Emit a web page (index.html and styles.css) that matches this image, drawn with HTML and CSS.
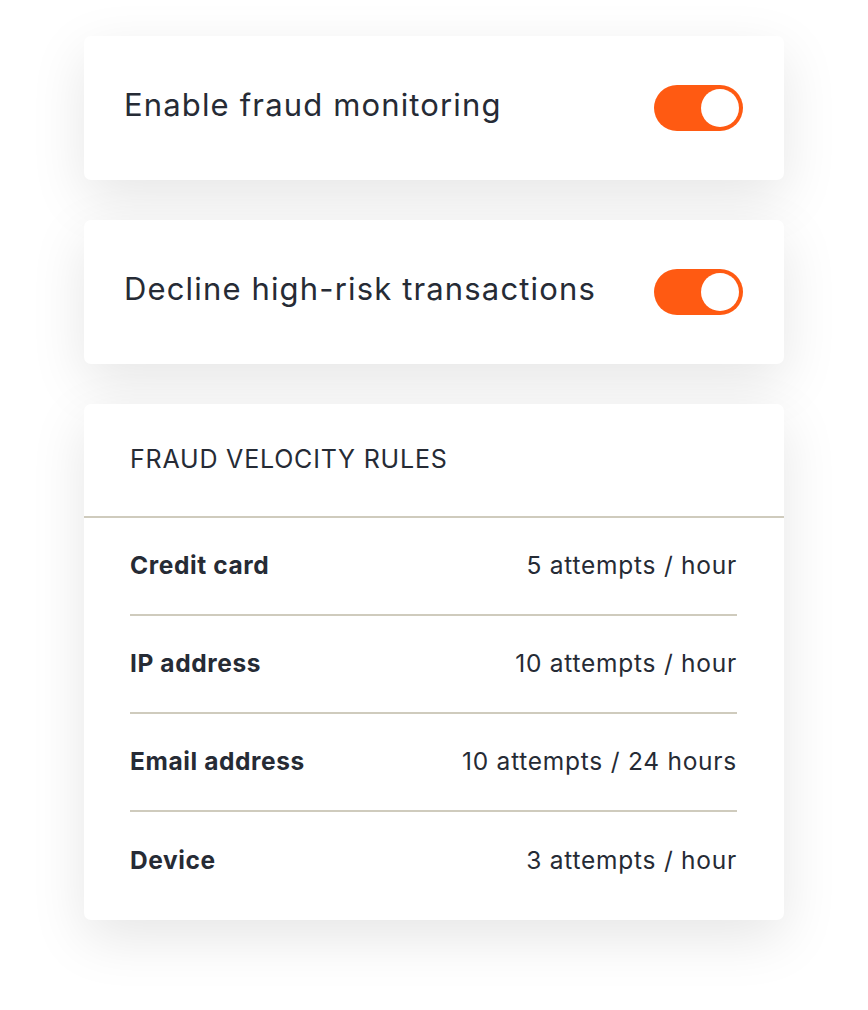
FILE: index.html
```html
<!DOCTYPE html>
<html>
<head>
<meta charset="utf-8">
<link rel="stylesheet" href="styles.css">
</head>
<body>
<main class="stack">
  <section class="card toggle-card">
    <span class="toggle-label">Enable fraud monitoring</span>
    <span class="switch"><span class="knob"></span></span>
  </section>
  <section class="card toggle-card">
    <span class="toggle-label">Decline high-risk transactions</span>
    <span class="switch"><span class="knob"></span></span>
  </section>
  <section class="card rules">
    <h2 class="rules-title">FRAUD VELOCITY RULES</h2>
    <ul class="rule-list">
      <li class="rule"><span class="rule-name">Credit card</span><span class="rule-value">5 attempts / hour</span></li>
      <li class="rule"><span class="rule-name">IP address</span><span class="rule-value">10 attempts / hour</span></li>
      <li class="rule"><span class="rule-name">Email address</span><span class="rule-value">10 attempts / 24 hours</span></li>
      <li class="rule"><span class="rule-name">Device</span><span class="rule-value">3 attempts / hour</span></li>
    </ul>
  </section>
</main>
</body>
</html>
```

FILE: styles.css
```css
* { box-sizing: border-box; }
html, body { margin: 0; padding: 0; background: #ffffff; }
body {
  font-family: "Inter", "Liberation Sans", sans-serif;
  color: #262b35;
  min-height: 1010px;
}
.stack {
  width: 700px;
  margin: 36px 0 0 84px;
  display: flex;
  flex-direction: column;
  gap: 40px;
}
.card {
  background: #ffffff;
  border-radius: 7px;
  box-shadow: 0 18px 56px rgba(0, 0, 0, 0.1);
}
.toggle-card {
  height: 144px;
  display: flex;
  align-items: center;
  justify-content: space-between;
  padding: 0 41px 0 40px;
}
.toggle-label {
  font-size: 31px;
  letter-spacing: 1.15px;
  line-height: 1;
  margin-top: -8px;
}
.switch {
  width: 89px;
  height: 46px;
  border-radius: 23px;
  background: #ff5a12;
  display: flex;
  align-items: center;
  justify-content: flex-end;
  padding-right: 4px;
}
.knob {
  width: 38px;
  height: 38px;
  border-radius: 50%;
  background: #ffffff;
}
.rules {
  padding-bottom: 10px;
}
.rules-title {
  margin: 0;
  font-size: 25px;
  font-weight: 400;
  letter-spacing: 0.8px;
  line-height: 1;
  height: 114px;
  padding: 43px 46px 0;
  border-bottom: 2px solid #cfcbbd;
}
.rule-list {
  list-style: none;
  margin: 0;
  padding: 0 47px 0 46px;
}
.rule {
  height: 98px;
  display: flex;
  align-items: center;
  justify-content: space-between;
  font-size: 24.5px;
  border-bottom: 2px solid #cfcbbd;
  padding-bottom: 3px;
}
.rule:last-child { border-bottom: none; }
.rule-name { font-weight: 700; letter-spacing: 0.6px; }
.rule-value { font-weight: 400; letter-spacing: 0.75px; }
```
